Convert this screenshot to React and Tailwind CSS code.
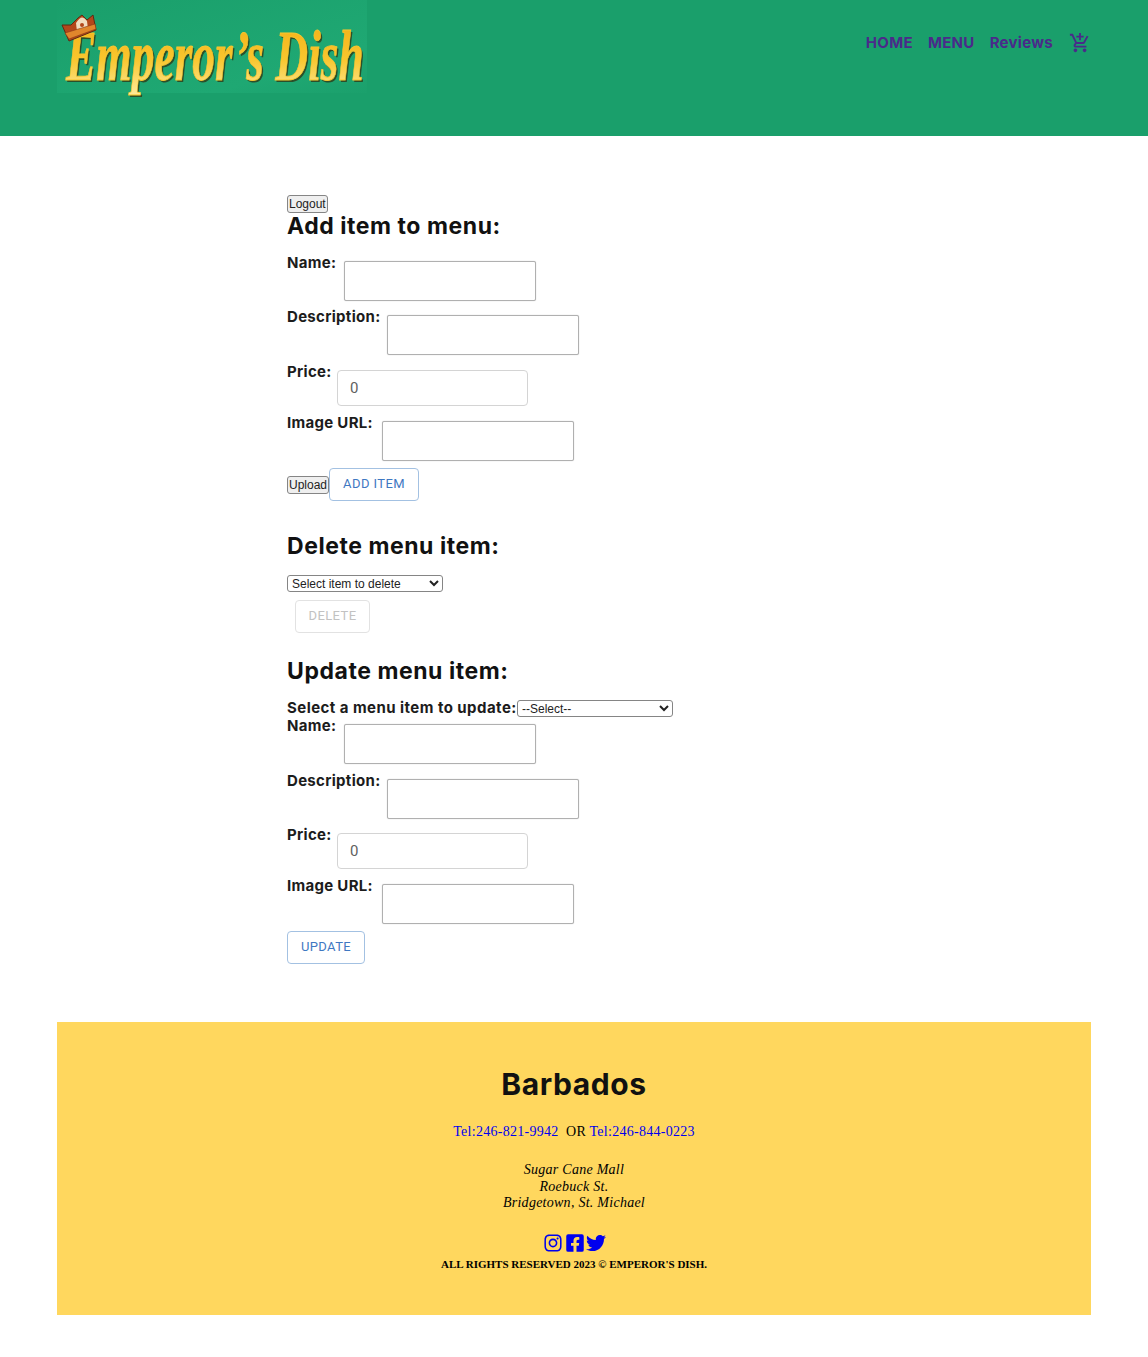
import React from 'react'
import { MdOutlineAddShoppingCart } from 'react-icons/md'
import { AiOutlineInstagram } from 'react-icons/ai'
import { FaFacebookSquare, FaTwitter } from 'react-icons/fa'

const heading = "font-['Inter',sans-serif] font-bold text-[23px] leading-[28px] text-[#111] tracking-[0.55px]"
const labelCls = "font-['Inter',sans-serif] font-bold text-[15px] leading-[18px] text-[#1c1c1c] whitespace-nowrap tracking-[0.3px]"
const native = "font-['Liberation_Sans',sans-serif] text-[#222]"

function Logo() {
    const textProps = {
        x: 9,
        y: 50,
        fontFamily: 'Liberation Serif, serif',
        fontStyle: 'italic',
        fontWeight: 700,
        fontSize: 45.5,
        transform: 'scale(1 1.6)',
    }
    return (
        <svg width="310" height="110" viewBox="0 0 310 110" className="block">
            <defs>
                <linearGradient id="gold" x1="0" y1="0" x2="0" y2="1">
                    <stop offset="0" stopColor="#f3ad14" />
                    <stop offset="0.55" stopColor="#f9c62e" />
                    <stop offset="1" stopColor="#fdeb9c" />
                </linearGradient>
                <linearGradient id="logobg" x1="0" y1="0" x2="1" y2="1">
                    <stop offset="0" stopColor="#1a9f6b" />
                    <stop offset="0.75" stopColor="#1fa873" />
                    <stop offset="1" stopColor="#1ba06c" />
                </linearGradient>
            </defs>
            <rect width="310" height="93" fill="url(#logobg)" />
            <g transform="translate(1.5 2)"><text {...textProps} fill="#2f3a18" opacity="0.8">Emperor’s Dish</text></g>
            <text {...textProps} fill="url(#gold)" stroke="#f9c62e" strokeWidth="0.5">Emperor’s Dish</text>
            <path d="M5 25 L14 25 L21 18 L25 15 L30 20 L36 15 L39 30 L12 41 Z" fill="#b3471b" stroke="#5f2a12" strokeWidth="1" />
            <path d="M19 23 Q25 13 30 21 L31 29 L20 32 Z" fill="#f2dcc0" />
            <circle cx="25" cy="25" r="2" fill="#b3471b" />
            <path d="M8 33 L38 24 L39 29 L12 39 Z" fill="#e0862c" stroke="#8a3514" strokeWidth="0.6" />
        </svg>
    )
}

function NavBar() {
    return (
        <header className="bg-[#1a9f6b] h-[136px] pl-[57px] pr-[57px] flex items-start justify-between">
            <Logo />
            <nav className="flex items-center gap-[15px] mt-[32px] font-['Inter',sans-serif] font-bold text-[15px] leading-[20px] tracking-[0.3px] text-[#4a2a8a]">
                <a>HOME</a>
                <a>MENU</a>
                <a>Reviews</a>
                <MdOutlineAddShoppingCart className="w-[22px] h-[22px] ml-[1px]" />
            </nav>
        </header>
    )
}

function TextField({ label, labelWidth }) {
    return (
        <div className="flex items-start">
            <label className={`${labelCls} ${labelWidth}`}>{label}</label>
            <input type="text" className="w-[192px] h-[40px] mt-[7px] bg-white border border-[#b0b0b0] rounded-[2px] shadow-[0_0_1px_#bbb]" />
        </div>
    )
}

function PriceField() {
    return (
        <div className="flex items-start">
            <label className={`${labelCls} w-[50px]`}>Price:</label>
            <div className="w-[191px] h-[36px] mt-[7px] bg-white border border-[#d4d4d4] rounded-[4px] px-[12px] flex items-center font-['Roboto',sans-serif] text-[15px] text-[#5f5f5f]">0</div>
        </div>
    )
}

function OutlineBtn({ children, className = '' }) {
    return (
        <button className={`h-[33px] pb-[2px] whitespace-nowrap border border-[#a3c1e2] rounded-[4px] bg-white font-['Roboto',sans-serif] text-[13px] tracking-[0.4px] text-[#3f78c2] ${className}`}>
            {children}
        </button>
    )
}

function NativeBtn({ children, className = '' }) {
    return (
        <button className={`${native} text-[12px] h-[18px] px-[1px] bg-[#efefef] border border-[#858585] rounded-[3px] leading-none ${className}`}>
            {children}
        </button>
    )
}

function NativeSelect({ children, className = '' }) {
    return (
        <select className={`${native} h-[17px] bg-white border border-[#858585] rounded-[3px] text-[12px] ${className}`}>
            <option>{children}</option>
        </select>
    )
}

function MenuAdmin() {
    return (
        <main className="pl-[287px] pt-[59px] h-[886px]">
            <NativeBtn className="block">Logout</NativeBtn>
            <h2 className={`${heading} mt-[-1px]`}>Add item to menu:</h2>

            <div className="mt-[14px] h-[54px]"><TextField label="Name:" labelWidth="w-[57px]" /></div>
            <div className="h-[55px]"><TextField label="Description:" labelWidth="w-[100px]" /></div>
            <div className="h-[51px]"><PriceField /></div>
            <div className="h-[54px]"><TextField label="Image URL:" labelWidth="w-[95px]" /></div>

            <div className="flex items-center w-max">
                <NativeBtn>Upload</NativeBtn>
                <OutlineBtn className="w-[90px]">ADD ITEM</OutlineBtn>
            </div>

            <h2 className={`${heading} mt-[31px]`}>Delete menu item:</h2>
            <NativeSelect className="block w-[156px] mt-[15px]">Select item to delete</NativeSelect>
            <button className="block ml-[8px] mt-[8px] h-[33px] pb-[2px] w-[75px] border border-[#e2e2e2] rounded-[4px] font-['Roboto',sans-serif] text-[13px] tracking-[0.4px] text-[#c2c2c2]">DELETE</button>

            <h2 className={`${heading} mt-[24px]`}>Update menu item:</h2>
            <div className="flex items-center mt-[14px] h-[18px]">
                <label className={`${labelCls} w-[230px] tracking-[0.45px]`}>Select a menu item to update:</label>
                <NativeSelect className="w-[156px]">--Select--</NativeSelect>
            </div>

            <div className="h-[55px]"><TextField label="Name:" labelWidth="w-[57px]" /></div>
            <div className="h-[54px]"><TextField label="Description:" labelWidth="w-[100px]" /></div>
            <div className="h-[51px]"><PriceField /></div>
            <div className="h-[54px]"><TextField label="Image URL:" labelWidth="w-[95px]" /></div>

            <OutlineBtn className="w-[78px] block">UPDATE</OutlineBtn>
        </main>
    )
}

function Footer() {
    return (
        <footer className="mx-[57px] h-[293px] bg-[#ffd75e] flex flex-col items-center font-['Liberation_Serif',serif] text-black">
            <h1 className="font-['Inter',sans-serif] font-bold text-[30px] leading-[36px] tracking-[0.6px] mt-[44px] text-[#111]">Barbados</h1>
            <p className="mt-[21px] text-[14px] leading-[18px] tracking-[0.27px]">
                <a className="text-[#0000ee]">Tel:246-821-9942</a> &nbsp;OR <a className="text-[#0000ee]">Tel:246-844-0223</a>
            </p>
            <p className="mt-[21px] italic text-[14px] leading-[16.5px] text-center tracking-[0.26px]">
                Sugar Cane Mall<br />Roebuck St.<br />Bridgetown, St. Michael
            </p>
            <div className="flex items-center gap-[1px] mt-[20px] text-[#0000ee]">
                <AiOutlineInstagram className="w-[22px] h-[22px]" />
                <FaFacebookSquare className="w-[20px] h-[20px]" />
                <FaTwitter className="w-[20px] h-[20px]" />
            </div>
            <p className="mt-[2px] text-[11px] leading-[16px] font-bold">ALL RIGHTS RESERVED 2023 © EMPEROR'S DISH.</p>
        </footer>
    )
}

export default function App() {
    return (
        <div className="bg-white min-h-[1357px]">
            <NavBar />
            <MenuAdmin />
            <Footer />
        </div>
    )
}
